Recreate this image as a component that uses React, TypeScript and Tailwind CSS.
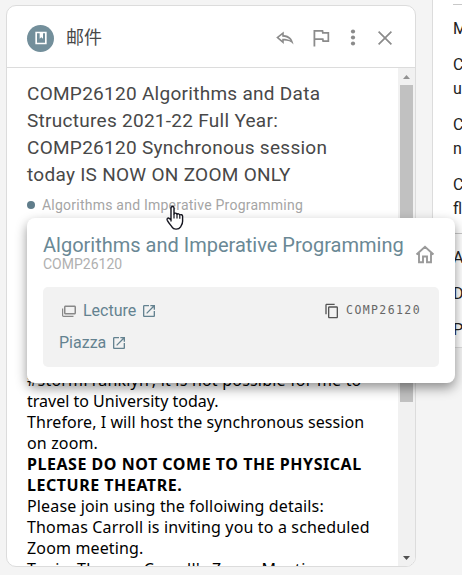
import React from 'react';

const actionIcon = 'fill-[#8b8b8b]';

function OpenIcon() {
  return (
    <svg className="size-4 fill-[#648290]" viewBox="0 0 24 24">
      <path d="M19 19H5V5h7V3H5c-1.1 0-2 .9-2 2v14c0 1.1.9 2 2 2h14c1.1 0 2-.9 2-2v-7h-2v7zM14 3v2h3.590l-9.830 9.830 1.410 1.410L19 6.410V10h2V3h-7z" />
    </svg>
  );
}

function Header() {
  return (
    <header className="flex h-[62px] shrink-0 items-center border-b border-[#dcdcdc] pt-[3px] pl-5 pr-[18px]">
      <span className="flex size-[27px] items-center justify-center rounded-full bg-[#738f9b]">
        <svg className="size-4 fill-white" viewBox="0 0 24 24">
          <path d="M3.500 2.500h17v19h-17v-19zm2.500 2.500v14h12V5h-3v8l-2.500-2L10 13V5H6z" fillRule="evenodd" />
        </svg>
      </span>
      <h1 className="ml-3 text-[18px] leading-6 text-[#484848]">邮件</h1>
      <div className="ml-auto flex items-center">
        <svg className={`${actionIcon} mr-[14px] h-5 w-5`} viewBox="0 0 20 20">
          <path fillRule="evenodd" d="M8.800 3.500v3.600c5.600.4 8.800 3.800 9.700 9.400-2.400-3.200-5.500-4.100-9.700-4.100v3.500L1.200 9.600l7.600-6.100zM7.200 6.700 3.700 9.600l3.500 2.900v-1.800c3.300-.1 6 .5 8.300 1.700-1.900-2.500-4.500-3.600-8.300-3.700v-2z" />
        </svg>
        <svg className={`${actionIcon} mr-2 size-6`} viewBox="0 0 24 24">
          <path d="M12.700 5.700l.4 2h5.400v6.500h-3.600l-.4-2H6.300V5.700h6.400M14.200 4H4.500v16.500h1.800v-6.500h6.700l.4 2h6.800V6h-5.600l-.4-2z" />
        </svg>
        <svg className={`${actionIcon} mr-2 size-6`} viewBox="0 0 24 24">
          <circle cx="12" cy="5.500" r="2.100" />
          <circle cx="12" cy="11.500" r="2.100" />
          <circle cx="12" cy="17.500" r="2.100" />
        </svg>
        <svg className={`${actionIcon} size-6`} viewBox="0 0 24 24">
          <path d="M19 6.200 17.800 5 12 10.800 6.200 5 5 6.200 10.800 12 5 17.800 6.200 19 12 13.200 17.800 19 19 17.800 13.200 12z" />
        </svg>
      </div>
    </header>
  );
}

function Scrollbar() {
  return (
    <div className="flex w-[17px] shrink-0 flex-col items-center bg-[#f1f1f1]">
      <div className="flex h-[17px] items-center">
        <svg className="h-1 w-[7px] fill-[#929292]" viewBox="0 0 7 4"><path d="M0 4 3.500 0 7 4z" /></svg>
      </div>
      <div className="h-[317px] w-[13px] bg-[#c1c1c1]" />
      <div className="mt-auto flex h-[17px] items-center">
        <svg className="h-1 w-[7px] fill-[#505050]" viewBox="0 0 7 4"><path d="M0 0 3.500 4 7 0z" /></svg>
      </div>
    </div>
  );
}

function MailPanel() {
  return (
    <section className="mt-[5px] ml-[6px] flex h-[562px] w-[410px] shrink-0 flex-col overflow-hidden rounded-[10px] border border-[#dcdcdc] bg-white">
      <Header />
      <div className="flex min-h-0 flex-1">
        <div className="min-w-0 flex-1 overflow-hidden pt-3 pl-5 whitespace-nowrap">
          <h2 className="text-[19px] leading-[27px] tracking-[0.28px] text-[#484848]">
            <div>COMP26120 Algorithms and Data</div>
            <div>Structures 2021-22 Full Year:</div>
            <div>COMP26120 Synchronous session</div>
            <div>today IS NOW ON ZOOM ONLY</div>
          </h2>
          <div className="mt-[7px] flex h-5 items-center text-[14px] tracking-[0.23px] text-[#a5a5a5]">
            <span className="mr-[7px] size-2 rounded-full bg-[#607d8b]" />
            Algorithms and Imperative Programming
          </div>
          <div className="mt-[155px] font-['Noto_Sans','Noto_Sans_CJK_SC',sans-serif] text-[16px] leading-[21px] tracking-[0.15px] text-black">
            <div className="tracking-[0.2px]">#stormFranklyn’, it is not possible for me to</div>
            <div className="tracking-[0.0px]">travel to University today.</div>
            <div className="tracking-[0.07px]">Threfore, I will host the synchronous session</div>
            <div>on zoom.</div>
            <div className="font-bold tracking-[0.53px]">PLEASE DO NOT COME TO THE PHYSICAL</div>
            <div className="font-bold tracking-[0.53px]">LECTURE THEATRE.</div>
            <div>Please join using the folloiwing details:</div>
            <div>Thomas Carroll is inviting you to a scheduled</div>
            <div>Zoom meeting.</div>
            <div className="tracking-[0.35px]">Topic: Thomas Carroll's Zoom Meeting</div>
          </div>
        </div>
        <Scrollbar />
      </div>
    </section>
  );
}

function SideList() {
  return (
    <aside className="ml-4 h-[348px] w-[30px] shrink-0 overflow-hidden border-b border-l border-[#dcdcdc] bg-white pl-5 text-[16px] leading-6 whitespace-nowrap text-[#222]">
      <div className="mt-1 border-t border-[#c8c8c8] pt-3">M</div>
      <div className="mt-3">C<br />u</div>
      <div className="mt-3">C<br />n</div>
      <div className="mt-3">C<br />fl</div>
      <div className="mt-3 border-t border-[#c8c8c8] pt-3">A</div>
      <div className="mt-3">D</div>
      <div className="mt-3">P</div>
    </aside>
  );
}

function CoursePopup() {
  return (
    <div className="absolute top-[218px] left-[27px] h-[165px] w-[428px] rounded-lg bg-white px-4 pt-4 whitespace-nowrap shadow-[0_5px_12px_rgba(0,0,0,0.42)]">
      <div className="flex h-[53px] justify-between">
        <div>
          <h3 className="text-[20px] leading-[22px] text-[#6a8895]">Algorithms and Imperative Programming</h3>
          <div className="text-[14px] leading-4 text-[#b0b0b0]">COMP26120</div>
        </div>
        <svg className="mt-[9px] mr-[3px] size-[22px] fill-none stroke-[#9a9a9a]" viewBox="0 0 22 22">
          <path d="M2.500 11.500 11 3.800l8.500 7.700M5 10v9.200h4v-5.700h4v5.700h4V10" strokeWidth="1.900" />
        </svg>
      </div>
      <div className="h-20 rounded-[5px] bg-[#f2f2f2] pt-2 pr-[18px] pl-4 text-[16px] text-[#648290]">
        <div className="flex h-8 items-center">
          <svg className="mr-[6px] ml-[2px] size-4 fill-[#888]" viewBox="0 0 16 16">
            <path d="M4.500 2.500h9c.8 0 1.500.7 1.500 1.500v6c0 .8-.7 1.500-1.500 1.500h-9C3.700 11.500 3 10.800 3 10V4c0-.8.7-1.500 1.500-1.500zm0 1.400v6.200h9V3.900h-9zM1 5.500h1.200v7.200h10.300v1.200h-10C1.700 13.900 1 13.300 1 12.500v-7z" fillRule="evenodd" />
          </svg>
          <span className="mr-[5px]">Lecture</span>
          <OpenIcon />
          <span className="ml-auto flex items-center font-['DejaVu_Sans_Mono',monospace] text-[11.500px] tracking-[1.400px] text-[#666]">
            <svg className="mr-[6px] size-4 fill-[#555]" viewBox="0 0 24 24">
              <path d="M16 1H4c-1.100 0-2 .9-2 2v14h2V3h12V1zm3 4H8c-1.100 0-2 .9-2 2v14c0 1.100.9 2 2 2h11c1.100 0 2-.9 2-2V7c0-1.100-.9-2-2-2zm0 16H8V7h11v14z" />
            </svg>
            COMP26120
          </span>
        </div>
        <div className="flex h-8 items-center">
          <span className="mr-[5px]">Piazza</span>
          <OpenIcon />
        </div>
      </div>
    </div>
  );
}

function HandCursor() {
  return (
    <svg className="absolute top-[205px] left-[165px] h-[25px] w-5" viewBox="0 0 20 25">
      <path
        d="M6 16.500V3c0-2 3-2 3 0v6c.4-1.300 2.800-1.200 3 .4.5-1 2.600-.7 2.800.8.8-1.100 2.800-.4 2.800 1.100v5c0 3-1.300 4.200-2 5.500-1.900 3-7.100 3-8.500.3-1.300-2-3.200-3.800-4.800-6.800-1-2 .9-3 2.200-1.600L6 14.700"
        fill="#fff" stroke="#15151f" strokeWidth="1.400" strokeLinejoin="round"
      />
      <path d="M9 9v4.500M12 9.500v4M14.800 10.500v3.300" stroke="#15151f" strokeWidth="1.200" />
    </svg>
  );
}

export default function App() {
  return (
    <main className="relative flex h-[575px] w-[462px] overflow-hidden bg-[#f4f4f4] font-['Roboto','Noto_Sans_CJK_SC',sans-serif]">
      <MailPanel />
      <SideList />
      <CoursePopup />
      <HandCursor />
    </main>
  );
}
